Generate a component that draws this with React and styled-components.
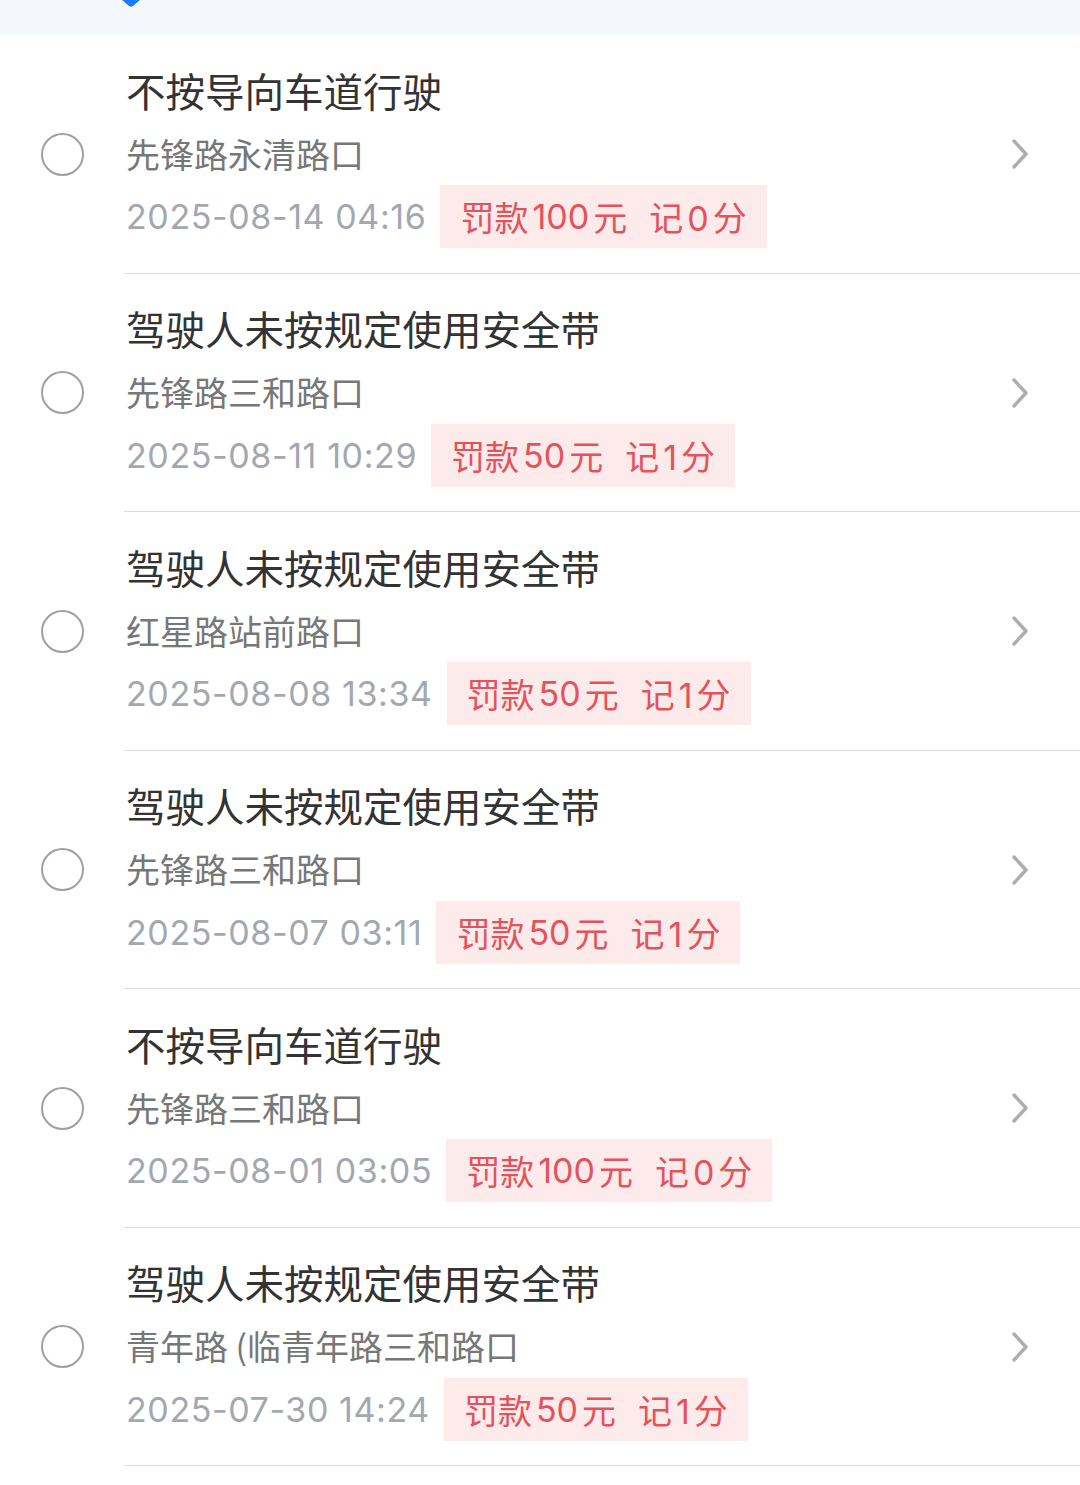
import styled, { createGlobalStyle } from "styled-components";

const GlobalStyle = createGlobalStyle`
  html, body {
    margin: 0;
    padding: 0;
    background: #fff;
  }
  body {
    font-family: "Noto Sans CJK SC", "Noto Sans", sans-serif;
    -webkit-font-smoothing: antialiased;
  }
`

const Page = styled.div`
  width: 1080px;
  background: #fff;
`

const TopBand = styled.div`
  height: 35px;
  background: #f4f7fb;
  display: flex;
  align-items: flex-start;
  padding-left: 121px;
  box-sizing: border-box;
`

const Pointer = styled.svg`
  display: block;
`

const Item = styled.div`
  display: flex;
  flex-direction: row;
  align-items: stretch;
`

const RadioCol = styled.div`
  width: 124px;
  flex-shrink: 0;
  display: flex;
  align-items: center;
  justify-content: center;
`

const Radio = styled.div`
  width: 39px;
  height: 39px;
  border-radius: 50%;
  border: 2.5px solid #a0a0a0;
`

const Body = styled.div`
  flex: 1;
  display: flex;
  align-items: center;
  padding: 25.5px 50px 25px 0;
  border-bottom: 1px solid #dcdcdc;
`

const Info = styled.div`
  flex: 1;
  display: flex;
  flex-direction: column;
  padding-left: 2px;
`

const Title = styled.div`
  height: 62px;
  line-height: 58px;
  font-size: 39.5px;
  color: #333;
  white-space: nowrap;
`

const Place = styled.div`
  height: 62px;
  line-height: 62px;
  font-size: 34px;
  color: #777;
  white-space: nowrap;
`

const Meta = styled.div`
  height: 62px;
  margin-top: 1px;
  display: flex;
  align-items: center;
  gap: 14px;
`

const Time = styled.span`
  font-family: Inter, "Noto Sans CJK SC", sans-serif;
  font-size: 34px;
  letter-spacing: 0.6px;
  color: #a3a8b0;
  white-space: nowrap;
`

const Badge = styled.span`
  display: flex;
  align-items: center;
  height: 63px;
  padding: 0 20px;
  background: #fdeaea;
  color: #e4525c;
  font-size: 34px;
  white-space: nowrap;
`

const Num = styled.span`
  font-family: Inter, "Noto Sans CJK SC", sans-serif;
  margin: 0 4px;
`

const Points = styled.span`
  margin-left: 22px;
`

const Chevron = styled.svg`
  flex-shrink: 0;
  display: block;
`

const records = [
  { title: "不按导向车道行驶", place: "先锋路永清路口", time: "2025-08-14 04:16", fine: 100, score: 0 },
  { title: "驾驶人未按规定使用安全带", place: "先锋路三和路口", time: "2025-08-11 10:29", fine: 50, score: 1 },
  { title: "驾驶人未按规定使用安全带", place: "红星路站前路口", time: "2025-08-08 13:34", fine: 50, score: 1 },
  { title: "驾驶人未按规定使用安全带", place: "先锋路三和路口", time: "2025-08-07 03:11", fine: 50, score: 1 },
  { title: "不按导向车道行驶", place: "先锋路三和路口", time: "2025-08-01 03:05", fine: 100, score: 0 },
  { title: "驾驶人未按规定使用安全带", place: "青年路 (临青年路三和路口", time: "2025-07-30 14:24", fine: 50, score: 1 },
];

const Record = ({ title, place, time, fine, score }) => (
  <Item>
    <RadioCol>
      <Radio />
    </RadioCol>
    <Body>
      <Info>
        <Title>{title}</Title>
        <Place>{place}</Place>
        <Meta>
          <Time>{time}</Time>
          <Badge>
            罚款<Num>{fine}</Num>元
            <Points>记<Num>{score}</Num>分</Points>
          </Badge>
        </Meta>
      </Info>
      <Chevron width="20" height="32" viewBox="0 0 20 32">
        <path d="M4 3 L16 16 L4 29" fill="none" stroke="#adadad" strokeWidth="3.4" strokeLinecap="round" strokeLinejoin="round" />
      </Chevron>
    </Body>
  </Item>
);

const App = () => {
  return (<>
    <GlobalStyle />
    <Page>
      <TopBand>
        <Pointer width="20" height="8" viewBox="0 0 20 8">
          <path d="M1 0 L8 6 Q10 7.6 12 6 L19 0 Z" fill="#1b7cf4" />
        </Pointer>
      </TopBand>
      {records.map((r, i) => <Record key={i} {...r} />)}
    </Page>
  </>);
}

export default App;
